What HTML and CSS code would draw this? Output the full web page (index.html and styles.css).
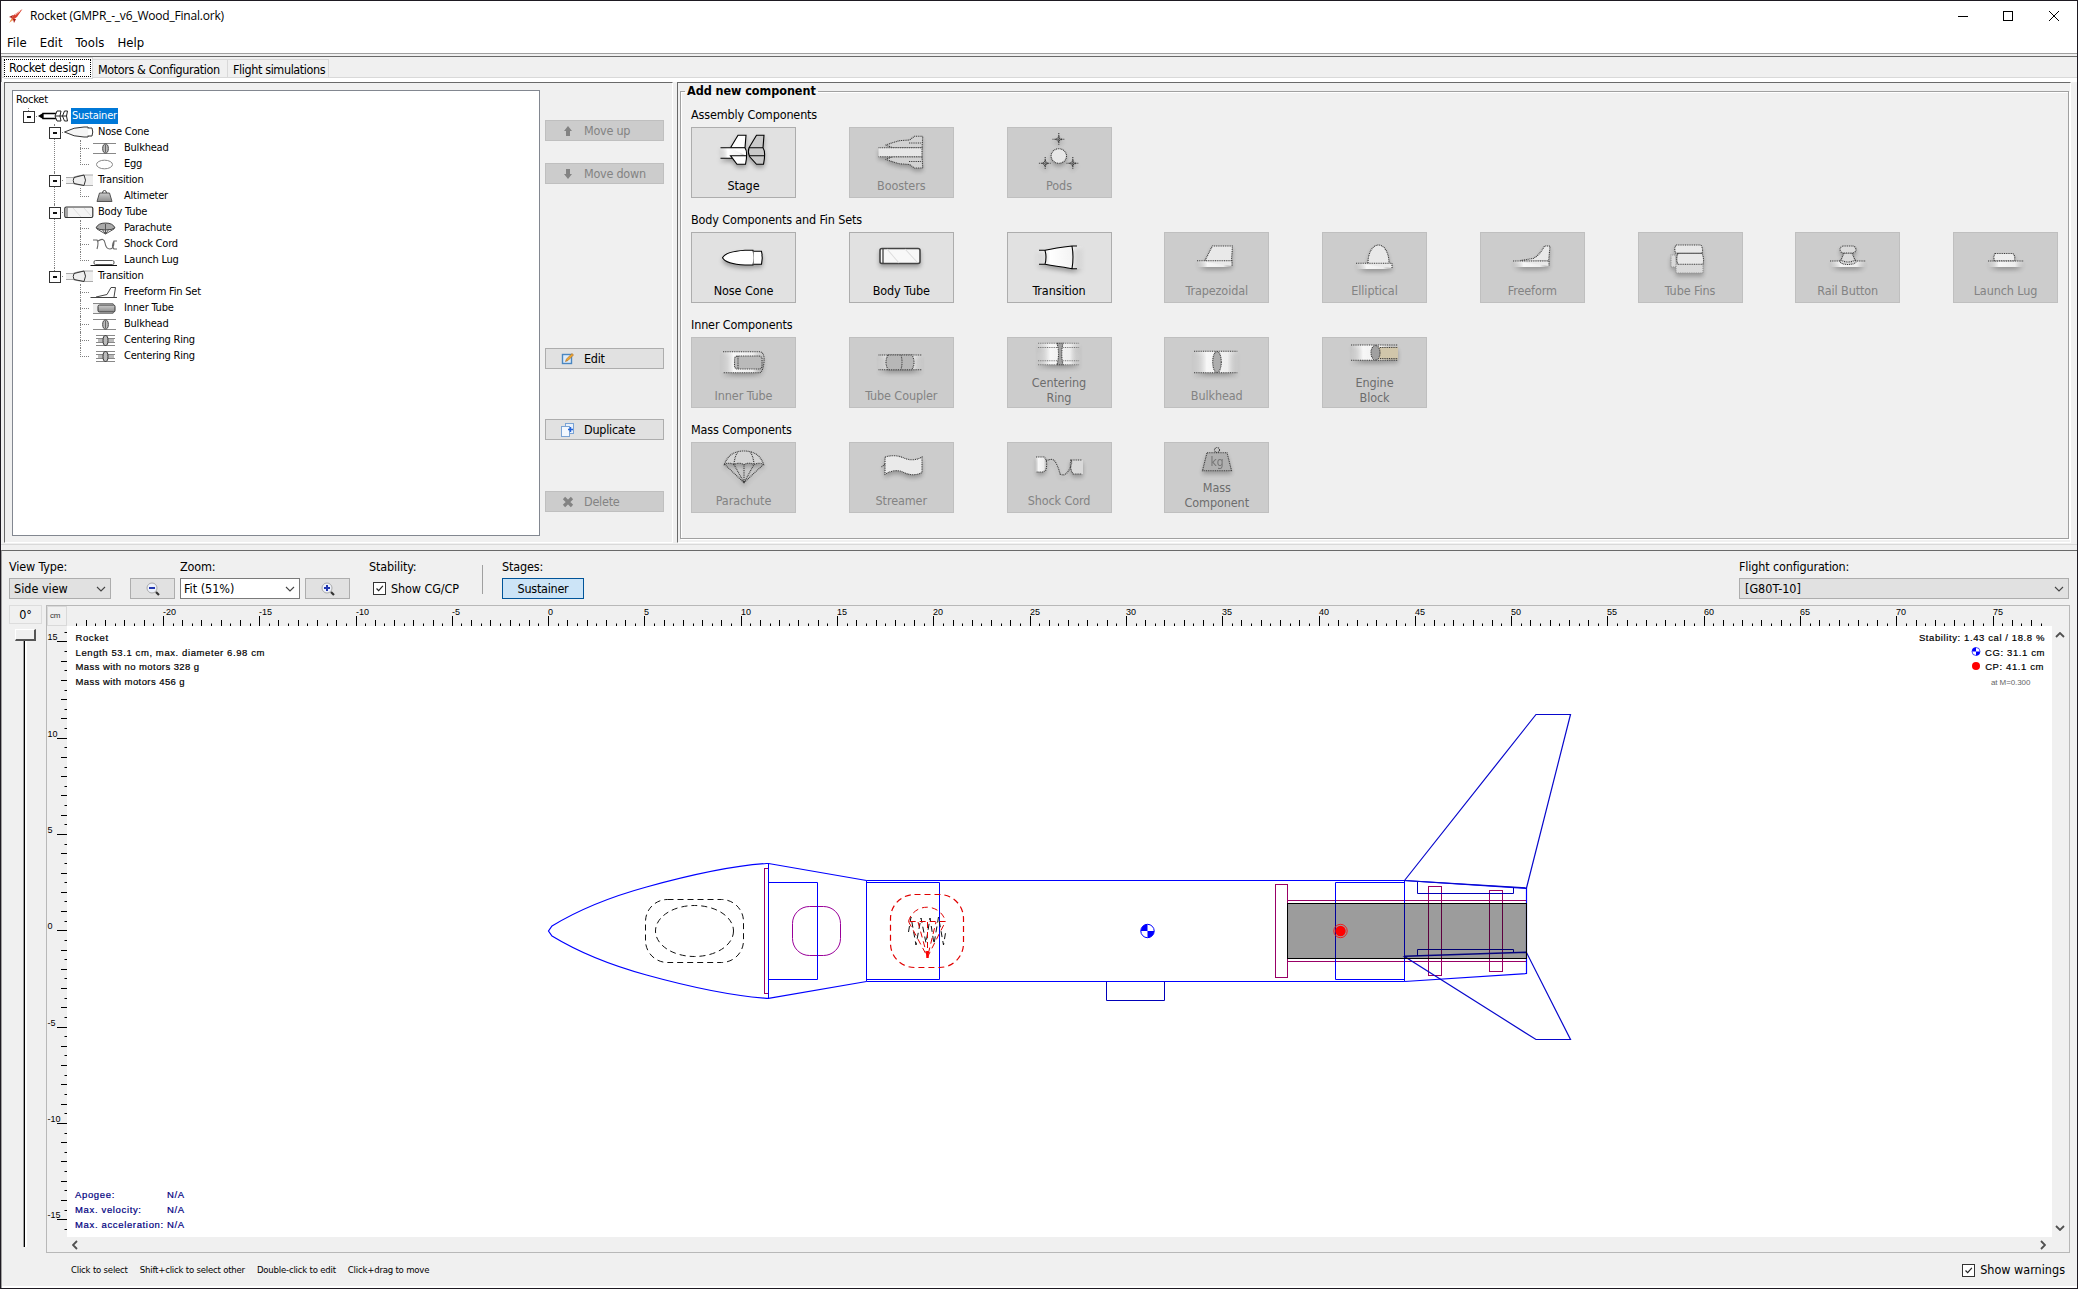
FILE: index.html
```html
<!DOCTYPE html>
<html lang="en">
<head>
<meta charset="utf-8">
<title>Rocket (GMPR_-_v6_Wood_Final.ork)</title>
<link rel="stylesheet" href="styles.css">
</head>
<body>
<svg class="defs" width="0" height="0">
  <defs>
    <linearGradient id="fadeL"><stop offset="0" stop-color="#fff" stop-opacity="0"/><stop offset=".3" stop-color="#fff"/><stop offset=".75" stop-color="#f4f4f4"/><stop offset="1" stop-color="#eee" stop-opacity="0"/></linearGradient>
    <linearGradient id="metal" x1="0" y1="0" x2="0" y2="1"><stop offset="0" stop-color="#ccc"/><stop offset="1" stop-color="#8c8c8c"/></linearGradient>
  </defs>
  <!-- tree icons -->
  <symbol id="t-stage" viewBox="0 0 30 16"><path d="M5 5.500H19V10.500H5Z" fill="#fff" stroke="#000" stroke-width="1.300"/><path d="M0 8 5 5V11Z"/><path d="M17 8 19 3H23L22 8 23 13H19ZM24.500 8 26.500 3H29.500L28.500 8 29.500 13H26.500Z" fill="#fff" stroke="#222"/><path d="M17 8h12" stroke="#222"/></symbol>
  <symbol id="t-nose" viewBox="0 0 30 16"><path d="M.500 8Q10 3 20 3H24Q26 8 24 13H20Q10 13 .500 8Z" fill="#f6f6f6" stroke="#333"/><path d="M24 4h4q1.500 4 0 8h-4" fill="#fff" stroke="#333"/></symbol>
  <symbol id="t-bulk" viewBox="0 0 30 16"><path d="M3 3.500H26M3 13.500H26" stroke="#888"/><ellipse cx="15.500" cy="8.500" rx="2.800" ry="4.500" fill="#bbb" stroke="#444"/><path d="M15.500 5v7" stroke="#666"/></symbol>
  <symbol id="t-egg" viewBox="0 0 30 16"><ellipse cx="14.500" cy="8.500" rx="8" ry="4.300" fill="#fff" stroke="#888"/></symbol>
  <symbol id="t-trans" viewBox="0 0 30 16"><path d="M2 5.500 9 5.500 20 3H29V13.500H20L9 11.500H2Z" fill="#efefef"/><path d="M2 5.500H9Q14 3.300 20 3M2 11.500H9Q14 13 20 13.500M20 3H29M20 13.500H29" fill="none" stroke="#aaa"/><path d="M10 5.500Q8.500 8.500 10 11.500M20 3Q23 8 20 13.500M10 5.500 20 3M10 11.500 20 13.500" fill="none" stroke="#333"/></symbol>
  <symbol id="t-mass" viewBox="0 0 30 16"><path d="M9.500 5h10l2.500 8.500H7Z" fill="url(#metal)" stroke="#555"/><path d="M12.500 5a2 2.500 0 0 1 4 0" fill="none" stroke="#444"/></symbol>
  <symbol id="t-tube" viewBox="0 0 30 16"><rect x=".800" y="3" width="28" height="10.500" rx="1.500" fill="#f4f4f4" stroke="#333" stroke-width="1.200"/><path d="M3 3.500v9.500" stroke="#555"/><path d="M9 4 17 13M20 4 27 12" stroke="#ddd"/></symbol>
  <symbol id="t-chute" viewBox="0 0 30 16"><path d="M6 8Q8 3 15.500 3T25 8Q22 10 15.500 10T6 8Z" fill="#aaa" stroke="#444"/><path d="M7 9 15.500 14 24 9M12 9l3.500 5 3.500-5M15.500 4v10" fill="none" stroke="#555"/></symbol>
  <symbol id="t-cord" viewBox="0 0 30 16"><path d="M3 4H7Q9 6 7 13M8 5Q14 1 15 7T20 13 24 5H27M27 13H24Q21 10 24 5" fill="none" stroke="#666" stroke-width="1.100"/></symbol>
  <symbol id="t-lug" viewBox="0 0 30 16"><path d="M.500 13.500H27" stroke="#111"/><rect x="4" y="8.500" width="20" height="4" rx="1.500" fill="#fff" stroke="#555"/></symbol>
  <symbol id="t-fin" viewBox="0 0 30 16"><path d="M.500 13.500H27" stroke="#444"/><path d="M6 13 17 10.500 21 3.500H25.500L24 13" fill="#fff" stroke="#444"/></symbol>
  <symbol id="t-inner" viewBox="0 0 30 16"><path d="M3 3.500H23Q26 8 23 13.500H3" fill="#eee" stroke="#888"/><rect x="8" y="5" width="17" height="7" rx="1.500" fill="url(#metal)" stroke="#333"/></symbol>
  <symbol id="t-ring" viewBox="0 0 30 16"><path d="M6 3.500H25M6 6.500H25M6 10.500H25M6 13.500H25" stroke="#888"/><path d="M8 8.500H24" stroke="#bbb" stroke-width="3"/><ellipse cx="15.500" cy="8.500" rx="2.500" ry="5" fill="#bbb" stroke="#333"/></symbol>
  <!-- palette icons -->
  <symbol id="i-stage" viewBox="0 0 48 48"><path d="M0 16.700H26V27.300H0Z" fill="url(#fadeL)" stroke="none"/><path d="M.500 16.700H11M.500 27.300H12"/><path d="M10.500 16.700 18 4.300H26L25 16.700Q28 21 25.500 33.300H17L10.500 24.700H26" fill="#fff"/><path d="M11 16.700H25"/><path d="M29 16.700 36.500 4.300H44L43 16.700Q46 21 43.500 33.300H36.500L29.500 25.500Q27.500 21 29 16.700H43M29.500 24.700H44" fill="#c9c9c9"/></symbol>
  <symbol id="i-boost" viewBox="0 0 48 48"><path d="M8.500 14 22 9.700 32.500 9 37.500 5.300H45.800L45 16.700H16ZM8.500 28.500 22 32.700 32.500 33.500 37.500 37H45.800L45 25.700H16Z" fill="#d4d4d4"/><path d="M32 12H44M32 30.500H44"/><path d="M1.500 16.700H45V25.700H1.500" fill="#ececec"/></symbol>
  <symbol id="i-pods" viewBox="0 0 48 48"><ellipse cx="23.800" cy="25" rx="7.700" ry="7.300" fill="#eee"/><g id="star4"><path d="M23.800 2v12.500M17.500 8.300h12.500M23.800 5l1 2.300 2.300 1-2.300 1-1 2.300-1-2.300-2.300-1 2.300-1Z"/></g><use href="#star4" x="-13.600" y="24"/><use href="#star4" x="14" y="24"/></symbol>
  <symbol id="i-nose" viewBox="0 0 48 48"><path d="M2.500 21.700Q6 15.500 25 14.300H33Q35 21.500 33 29H25Q6 28 2.500 21.700Z" fill="#fff"/><path d="M33.500 15.300H41.500Q43 21.700 41.500 28.300H33.500" fill="#fff"/></symbol>
  <symbol id="i-tube" viewBox="0 0 48 48"><rect x="3" y="12.500" width="40" height="15" rx="2" fill="#f8f8f8" stroke="#444" stroke-width="1.600"/><path d="M6 13v14" stroke="#222"/><path d="M10 13 22 27M28 13 40 26" stroke="#ddd"/></symbol>
  <symbol id="i-trans" viewBox="0 0 48 48"><path d="M1 14.300H10L37 10H48V32.700H37L10 28.300H1Z" fill="url(#fadeL)" stroke="none"/><path d="M4 14.300H10Q20 12 37 10H42M4 28.300H10Q20 30 37 32.700H42M10 14.300Q12 21 10 28.300M37 10Q39 21 37 32.700" fill="none"/></symbol>
  <symbol id="i-trap" viewBox="0 0 48 48"><path d="M4 24.700H39V31H4Z" fill="url(#fadeL)" stroke="none"/><path d="M4 24.700H39V30M12 24.500 19.300 10H39.500L38.500 24.500" fill="#efefef"/></symbol>
  <symbol id="i-ellip" viewBox="0 0 48 48"><path d="M5 27.300H41V33H5Z" fill="url(#fadeL)" stroke="none"/><path d="M5 27.300H41V32M17 27C17 16 22 9 27.500 9S38 16 38 27" fill="#efefef"/></symbol>
  <symbol id="i-free" viewBox="0 0 48 48"><path d="M5 25H41V31H5Z" fill="url(#fadeL)" stroke="none"/><path d="M5 25H41V30M12.500 24.500 25 22.500Q31 20 36.500 10H42L40.700 24.500" fill="#efefef"/></symbol>
  <symbol id="i-tfins" viewBox="0 0 48 48"><path d="M10 28.300V37H37V28.300M9 19H5V31H10" fill="#ddd" stroke="#888"/><path d="M10 9H35Q37.500 13 36 17.300H10Q7.500 13 10 9ZM12 17.300H36Q38.500 23 37 28.300H12Q9.500 23 12 17.300Z" fill="#eee"/></symbol>
  <symbol id="i-rail" viewBox="0 0 48 48"><path d="M6 25H42V31H6Z" fill="url(#fadeL)" stroke="none"/><path d="M6 25H42"/><ellipse cx="24" cy="25.500" rx="8" ry="3" fill="#ddd"/><path d="M20 17 17 24Q24 28 31 24L28 17Z" fill="#ddd"/><rect x="16" y="10" width="16" height="7" rx="3.500" fill="#ddd"/></symbol>
  <symbol id="i-lug" viewBox="0 0 48 48"><path d="M6 25H42V31H6Z" fill="url(#fadeL)" stroke="none"/><path d="M6 25H42"/><path d="M13 17.500H31Q34 21 32 24.700H12.500Q11 21 13 17.500Z" fill="#f4f4f4"/></symbol>
  <symbol id="i-inner" viewBox="0 0 48 48"><path d="M1 10.700H43V31.700H1Z" fill="url(#fadeL)" stroke="none"/><path d="M3 10.700H40Q45 12 44 21T40 31.700H3" fill="none"/><rect x="14.500" y="15" width="27.500" height="13" rx="3" fill="#b8b8b8"/><path d="M18 15v13"/></symbol>
  <symbol id="i-coup" viewBox="0 0 48 48"><path d="M1 14H46V28.700H1Z" fill="url(#fadeL)" stroke="none"/><path d="M1.500 14H45M1.500 28.700H45"/><path d="M11 14H35Q39 21 35 28.700H11Q7 21 11 14ZM24 14Q26 21 24 28.700" fill="#b4b4b4"/></symbol>
  <symbol id="i-ring" viewBox="0 0 48 48"><path d="M2 10.300H46V31.700H2Z" fill="url(#fadeL)" stroke="none"/><path d="M3 10.300H44.500M3 14.500H44.500M3 27.700H44.500M3 31.700H44.500" stroke="#666"/><path d="M22 10.300H28Q25.500 21 28 31.700H22Q25 21 22 10.300Z" fill="#999"/></symbol>
  <symbol id="i-bulk" viewBox="0 0 48 48"><path d="M0 10.300H46V31.700H0Z" fill="url(#fadeL)" stroke="none"/><path d="M1 10.300H44.500M1 31.700H44.500"/><ellipse cx="24" cy="21" rx="4.300" ry="10.500" fill="#a8a8a8"/></symbol>
  <symbol id="i-block" viewBox="0 0 48 48"><path d="M0 12H40V27.300H0Z" fill="url(#fadeL)" stroke="none"/><path d="M28 14H47V26.500H28Z" fill="#d3c5a5" stroke="none"/><path d="M0 12H47M0 27.300H47M29 14.500H47M29 25.500H47"/><ellipse cx="24.500" cy="19.700" rx="4.500" ry="7.300" fill="#999"/></symbol>
  <symbol id="i-chute" viewBox="0 0 48 48"><path d="M4.500 18.300Q9 5 24 5T43.500 18.300Q39 16 34 18.500 29 16 24 18.500 19 16 14 18.500 9 16 4.500 18.300Z" fill="#d6d6d6"/><path d="M4.500 18.300 24 36.700 43.500 18.300M14 18.500 24 36.700 34 18.500M24 18.500V36.700M14 18Q15 9 18 6M34 18Q33 9 30 6" fill="none"/></symbol>
  <symbol id="i-stream" viewBox="0 0 48 48"><path d="M8 11Q18 8 27 12T45 11V26.500Q36 31 27 26.500T8 28.300ZM8 18 4 21.500" fill="#f0f0f0"/></symbol>
  <symbol id="i-cord" viewBox="0 0 48 48"><path d="M0 11H9Q13 14 11 24L8 26H0Z" fill="url(#fadeL)" stroke="none"/><path d="M36 14H48V28H38Q34 21 36 14Z" fill="#dcdcdc" stroke="none"/><path d="M1 11H9Q13 14 11 24L8 26H1M11 15Q18 11 21 17T25 28Q30 31 34 24T36 14H47M36 14Q34 21 38 28H47" fill="none"/></symbol>
</svg>

<header class="titlebar">
  <svg class="app-icon" width="16" height="18" viewBox="0 0 16 18"><path d="M2 15 5 8.500 14.500 2 9 10Z" fill="#d9402f"/><path d="M5 8 1 10 4 11ZM8 12 6 16 5 12Z" fill="#a61e16"/><path d="M1 16 4 11 5 13Z" fill="#f3a35c"/><path d="M7 8 12 4" stroke="#f7c9c0"/></svg>
  <span class="title-text">Rocket (GMPR_-_v6_Wood_Final.ork)</span>
  <svg class="win-controls" width="102" height="12" viewBox="0 0 102 12" fill="none" stroke="#000"><path d="M0 6.500H10"/><rect x="45.500" y="1.500" width="9" height="9"/><path d="M91 1 101 11M101 1 91 11"/></svg>
</header>
<nav class="menubar"><span>File</span><span>Edit</span><span>Tools</span><span>Help</span></nav>
<nav class="tabs"><span class="tab active">Rocket design</span><span class="tab">Motors &amp; Configuration</span><span class="tab">Flight simulations</span></nav>

<main class="upper">
  <section class="design">
    <div class="tree">
      <div class="root">Rocket</div>
      <ul>
        <li><div class="node open selected"><svg><use href="#t-stage"/></svg><span>Sustainer</span></div>
          <ul>
            <li><div class="node open"><svg><use href="#t-nose"/></svg><span>Nose Cone</span></div>
              <ul>
                <li><div class="node"><svg><use href="#t-bulk"/></svg><span>Bulkhead</span></div></li>
                <li><div class="node"><svg><use href="#t-egg"/></svg><span>Egg</span></div></li>
              </ul></li>
            <li><div class="node open"><svg><use href="#t-trans"/></svg><span>Transition</span></div>
              <ul><li><div class="node"><svg><use href="#t-mass"/></svg><span>Altimeter</span></div></li></ul></li>
            <li><div class="node open"><svg><use href="#t-tube"/></svg><span>Body Tube</span></div>
              <ul>
                <li><div class="node"><svg><use href="#t-chute"/></svg><span>Parachute</span></div></li>
                <li><div class="node"><svg><use href="#t-cord"/></svg><span>Shock Cord</span></div></li>
                <li><div class="node"><svg><use href="#t-lug"/></svg><span>Launch Lug</span></div></li>
              </ul></li>
            <li><div class="node open"><svg><use href="#t-trans"/></svg><span>Transition</span></div>
              <ul>
                <li><div class="node"><svg><use href="#t-fin"/></svg><span>Freeform Fin Set</span></div></li>
                <li><div class="node"><svg><use href="#t-inner"/></svg><span>Inner Tube</span></div></li>
                <li><div class="node"><svg><use href="#t-bulk"/></svg><span>Bulkhead</span></div></li>
                <li><div class="node"><svg><use href="#t-ring"/></svg><span>Centering Ring</span></div></li>
                <li><div class="node"><svg><use href="#t-ring"/></svg><span>Centering Ring</span></div></li>
              </ul></li>
          </ul></li>
      </ul>
    </div>
    <div class="actions">
      <button class="btn action up" disabled><svg viewBox="0 0 16 16"><path d="M8 3 12 8H10V13H6V8H4Z" fill="#838383"/></svg>Move up</button>
      <button class="btn action down" disabled><svg viewBox="0 0 16 16"><path d="M8 13 12 8H10V3H6V8H4Z" fill="#838383"/></svg>Move down</button>
      <button class="btn action edit"><svg viewBox="0 0 16 16"><rect x="2.500" y="3.500" width="9" height="9" fill="#dcebfa" stroke="#4a86c0" stroke-width="1.400"/><path d="M5.500 10.500 6.500 8 12 2.500 13.500 4 8 9.500Z" fill="#f0a830" stroke="#a8641a" stroke-width=".6"/></svg>Edit</button>
      <button class="btn action dup"><svg viewBox="0 0 16 16"><rect x="5.500" y="1.500" width="8" height="10" fill="#e8f1fc" stroke="#7aa3d4"/><rect x="1.500" y="4.500" width="8" height="10" fill="#f3f8fe" stroke="#7aa3d4"/><path d="M8 7.500h5M10.500 5v5" stroke="#2463d8" stroke-width="1.400"/></svg>Duplicate</button>
      <button class="btn action del" disabled><svg viewBox="0 0 16 16"><path d="M4 4 12 12M12 4 4 12" stroke="#838383" stroke-width="3.200"/></svg>Delete</button>
    </div>
  </section>

  <section class="palette">
    <fieldset>
      <legend>Add new component</legend>
      <h3>Assembly Components</h3>
      <div class="row">
        <button class="btn part"><svg><use href="#i-stage"/></svg>Stage</button>
        <button class="btn part" disabled><svg><use href="#i-boost"/></svg>Boosters</button>
        <button class="btn part" disabled><svg><use href="#i-pods"/></svg>Pods</button>
      </div>
      <h3>Body Components and Fin Sets</h3>
      <div class="row">
        <button class="btn part"><svg><use href="#i-nose"/></svg>Nose Cone</button>
        <button class="btn part"><svg><use href="#i-tube"/></svg>Body Tube</button>
        <button class="btn part"><svg><use href="#i-trans"/></svg>Transition</button>
        <button class="btn part" disabled><svg><use href="#i-trap"/></svg>Trapezoidal</button>
        <button class="btn part" disabled><svg><use href="#i-ellip"/></svg>Elliptical</button>
        <button class="btn part" disabled><svg><use href="#i-free"/></svg>Freeform</button>
        <button class="btn part" disabled><svg><use href="#i-tfins"/></svg>Tube Fins</button>
        <button class="btn part" disabled><svg><use href="#i-rail"/></svg>Rail Button</button>
        <button class="btn part" disabled><svg><use href="#i-lug"/></svg>Launch Lug</button>
      </div>
      <h3>Inner Components</h3>
      <div class="row">
        <button class="btn part" disabled><svg><use href="#i-inner"/></svg>Inner Tube</button>
        <button class="btn part" disabled><svg><use href="#i-coup"/></svg>Tube Coupler</button>
        <button class="btn part two" disabled><svg><use href="#i-ring"/></svg><span>Centering<br>Ring</span></button>
        <button class="btn part" disabled><svg><use href="#i-bulk"/></svg>Bulkhead</button>
        <button class="btn part two" disabled><svg><use href="#i-block"/></svg><span>Engine<br>Block</span></button>
      </div>
      <h3>Mass Components</h3>
      <div class="row">
        <button class="btn part" disabled><svg><use href="#i-chute"/></svg>Parachute</button>
        <button class="btn part" disabled><svg><use href="#i-stream"/></svg>Streamer</button>
        <button class="btn part" disabled><svg><use href="#i-cord"/></svg>Shock Cord</button>
        <button class="btn part two" disabled><svg viewBox="0 0 48 48"><path d="M14 14.700H34L38.500 32.700H9.500Z" fill="#aaa"/><circle cx="24" cy="12" r="2.500" fill="none"/><text class="kg" x="24" y="28">kg</text></svg><span>Mass<br>Component</span></button>
      </div>
    </fieldset>
  </section>
</main>

<section class="lower">
  <div class="controls">
    <div class="field view"><label>View Type:</label><div class="combo">Side view<svg class="chev" viewBox="0 0 10 6"><path d="M1 1 5 5 9 1"/></svg></div></div>
    <div class="field zoomctl">
      <label>Zoom:</label>
      <div class="line">
        <button class="btn sq"><svg viewBox="0 0 16 16"><circle cx="7" cy="7" r="5" fill="#eef2fb" stroke="#aaa"/><path d="M4 7H10" stroke="#2338b0" stroke-width="2"/><path d="M11 11 14 14" stroke="#333" stroke-width="2.200"/></svg></button>
        <div class="combo white">Fit (51%)<svg class="chev" viewBox="0 0 10 6"><path d="M1 1 5 5 9 1"/></svg></div>
        <button class="btn sq"><svg viewBox="0 0 16 16"><circle cx="7" cy="7" r="5" fill="#eef2fb" stroke="#aaa"/><path d="M4 7H10M7 4V10" stroke="#2338b0" stroke-width="2"/><path d="M11 11 14 14" stroke="#333" stroke-width="2.200"/></svg></button>
      </div>
    </div>
    <div class="field stab"><label>Stability:</label><div class="check"><i><svg viewBox="0 0 13 13"><path d="M3 6.500 5.500 9 10.500 3.500"/></svg></i>Show CG/CP</div></div>
    <div class="sep"></div>
    <div class="field stages"><label>Stages:</label><button class="btn toggle">Sustainer</button></div>
    <div class="field flight"><label>Flight configuration:</label><div class="combo">[G80T-10]<svg class="chev" viewBox="0 0 10 6"><path d="M1 1 5 5 9 1"/></svg></div></div>
  </div>

  <div class="work">
    <div class="rotate">
      <div class="deg">0°</div>
      <div class="thumb"></div>
      <div class="track"></div>
    </div>
    <div class="viewer">
      <div class="unit">cm</div>
      <svg class="hruler" id="hruler" viewBox="67 605 1985 20"></svg>
      <svg class="vruler" id="vruler" viewBox="47 625 20 611"></svg>
      <svg class="stage" viewBox="67 625 1985 611" fill="none" stroke="#0000ff">
        <g stroke="#990066"><rect x="764.500" y="867.500" width="4" height="125"/><rect x="1275.500" y="883.500" width="12" height="93"/><path d="M1287.500 899.500H1526.500M1287.500 960.500H1526.500"/><rect x="1428.500" y="885.500" width="13" height="89"/><rect x="1489.500" y="889.500" width="13" height="81"/></g>
        <rect x="792.500" y="905.500" width="48" height="49" rx="17" stroke="#990099"/>
        <path d="M768.500 862.500V997.500M768.500 881.500H817.500V978.500H768.500M866.500 879.500H1404.500V980.500H866.500ZM866.500 881.500H939.500V978.500H866.500M1404.500 881.500H1335.500V978.500H1404.500"/>
        <path stroke-width="1.200" d="M768.500 862.500H766.500C735 864.500 690 874 646.500 886 610 896 575 911 552 925L548.500 930 552 935C575 949 610 964 646.500 974 690 986 735 995 766.500 997.300H768.500L866.500 980.500M768.500 862.500 866.500 879.500M1404.500 879.500 1526.500 887.500V972.500L1404.500 980.500"/>
        <g stroke="#111" stroke-dasharray="6 4"><rect x="645.500" y="898.500" width="98" height="63" rx="22"/><ellipse cx="694.500" cy="930" rx="39" ry="25.500"/><path d="M908.500 931 911 916 916 944 921 917 926 942 930 917 934 943 938.500 916 943.500 944 946 929"/></g>
        <g stroke="#e00000" stroke-dasharray="6 4"><rect x="890.500" y="893.500" width="73" height="73" rx="24" stroke-width="1.200"/><path d="M908.500 920.500A19 18.500 0 0 1 945.500 920.500ZM908.500 920.500 927.500 956 945.500 920.500M918 921 927.500 956 936 921M927.500 921V956"/></g>
        <path d="M927.500 950V957" stroke="#f00" stroke-width="2.500"/>
        <path stroke="#0000b8" d="M1106.500 980.500V999.500H1164.500V980.500M1417.500 881V892.500H1513.500V887M1417.500 955V948.500H1513.500V952"/>
        <path stroke="#0808cc" stroke-width="1.200" d="M1404.500 879.500 1536 713.500H1570.500L1526.500 887ZM1404.500 955.500 1526.500 951.500 1570.500 1038.500H1536ZM1404.500 955 1526.500 951"/>
        <rect x="1287.500" y="902.500" width="239" height="55" fill="#000" fill-opacity=".39" stroke="#000"/>
        <circle cx="1147.500" cy="930" r="6.700" fill="#fff"/><path d="M1147.500 930V923.300A6.700 6.700 0 0 0 1140.800 930ZM1147.500 930V936.700A6.700 6.700 0 0 0 1154.200 930Z" fill="#00f" stroke="none"/>
        <circle cx="1340.500" cy="930" r="5.200" fill="#f00" stroke="none"/><circle cx="1340.500" cy="930" r="6.700" stroke="#f00" stroke-width=".8"/>
        <circle cx="1976" cy="650.500" r="4" fill="#fff" stroke-width=".7"/><path d="M1976 650.500V646.500A4 4 0 0 0 1972 650.500ZM1976 650.500V654.500A4 4 0 0 0 1980 650.500Z" fill="#00f" stroke="none"/>
        <circle cx="1976" cy="665" r="4" fill="#f00" stroke="none"/>
        <g class="info"><text x="75.500" y="640">Rocket</text><text x="75.500" y="655">Length 53.1 cm, max. diameter 6.98 cm</text><text class="tight" x="75.500" y="669">Mass with no motors 328 g</text><text class="tight" x="75.500" y="684">Mass with motors 456 g</text></g>
        <g class="info end"><text x="2045" y="640">Stability: 1.43 cal / 18.8 %</text><text x="2045" y="655">CG: 31.1 cm</text><text x="2044" y="669">CP: 41.1 cm</text></g>
        <text class="mach" x="1991" y="684">at M=0.300</text>
        <g class="info flightdata"><text x="75" y="1197">Apogee:</text><text x="167" y="1197">N/A</text><text x="75" y="1212">Max. velocity:</text><text x="167" y="1212">N/A</text><text x="75" y="1227">Max. acceleration:</text><text x="167" y="1227">N/A</text></g>
      </svg>
      <div class="vscroll"><svg class="arrow" viewBox="0 0 10 6"><path d="M1 5 5 1 9 5"/></svg><svg class="arrow" viewBox="0 0 10 6"><path d="M1 1 5 5 9 1"/></svg></div>
      <div class="hscroll"><svg class="arrow h" viewBox="0 0 6 10"><path d="M5 1 1 5 5 9"/></svg><svg class="arrow h" viewBox="0 0 6 10"><path d="M1 1 5 5 1 9"/></svg></div>
    </div>
  </div>

  <footer class="status">
    <span>Click to select</span><span>Shift+click to select other</span><span>Double-click to edit</span><span>Click+drag to move</span>
    <div class="check warn"><i><svg viewBox="0 0 13 13"><path d="M3 6.500 5.500 9 10.500 3.500"/></svg></i>Show warnings</div>
  </footer>
</section>
<script src="rulers.js"></script>
</body>
</html>
```
FILE: rulers.js
```js
// Draws both rulers: long ticks every 5 cm, medium every 1 cm, short every 0.5 cm.
const PX_PER_CM = 19.26;
const tickLength = half => half % 10 === 0 ? 10 : half % 2 === 0 ? 6 : 2.5;

let h = "";
for (let half = -49; half <= 155; half++) {
  const x = Math.floor(548.6 + half / 2 * PX_PER_CM) + 0.5;
  h += `<path d="M${x} 625V${625 - tickLength(half)}"/>`;
  if (half % 10 === 0) h += `<text x="${x - 0.5}" y="614">${half / 2}</text>`;
}
document.getElementById("hruler").innerHTML = h;

let v = "";
for (let half = -31; half <= 31; half++) {
  const y = Math.floor(929.8 - half / 2 * PX_PER_CM) + 0.5;
  v += `<path d="M67 ${y}H${67 - tickLength(half)}"/>`;
  if (half % 10 === 0) v += `<text x="47.500" y="${y - 2}">${half / 2}</text>`;
}
document.getElementById("vruler").innerHTML = v;
```
FILE: styles.css
```css
* { box-sizing: border-box; }
body {
  margin: 0; width: 2078px; height: 1289px; overflow: hidden;
  display: flex; flex-direction: column;
  background: #f0f0f0; color: #000;
  border: 1px solid #1e1a22;
  font: 12.5px/16px "DejaVu Sans Condensed", "Noto Sans", sans-serif;
  letter-spacing: -0.25px;
}
.defs { position: absolute; }
svg { display: block; flex: none; }

.titlebar { height: 29px; background: #fff; display: flex; align-items: center; padding: 0 17px 0 7px; }
.app-icon { margin-right: 6px; }
.title-text { font: 12px/16px "Open Sans", "Noto Sans", sans-serif; letter-spacing: -0.2px; }
.win-controls { margin-left: auto; }
.menubar { height: 24px; background: #fff; border-bottom: 1px solid #a0a0a0; display: flex; gap: 13px; padding: 5px 6px 0; font-size: 13px; letter-spacing: 0.05px; }

.tabs { height: 26px; margin: 2px 0 0; border-top: 1px solid #696969; border-left: 1px solid #a0a0a0; display: flex; align-items: flex-end; padding: 0 0 3px 2px; letter-spacing: -0.4px; position: relative; }
.tabs::after { content: ""; position: absolute; left: 0; right: 0; bottom: 0; height: 4px; background: #fff; border-top: 1px solid #d9d9d9; }
.tab { height: 20px; border: 1px solid #d9d9d9; border-left: 0; padding: 2px 4px 0 5px; white-space: nowrap; }
.tab + .tab { width: 101px; }
.tab:nth-child(2) { width: 135px; }
.tab.active { width: 89px; height: 22px; background: #fff; position: relative; z-index: 1; padding-left: 5px; letter-spacing: -0.2px; }
.tab.active::after { content: ""; position: absolute; inset: 1px 1px 1px 0; border: 1px dotted #000; }

.upper { height: 463px; display: flex; gap: 4px; padding: 0 6px 0 3px; border-bottom: 1px solid #d9d9d9; }
.design, .palette { border: 1px solid #696969; border-right-color: #fff; border-bottom-color: #fff; height: 461px; }
.design { width: 669px; display: flex; padding: 7px 0 0 7px; gap: 5px; }
.tree { width: 528px; height: 446px; background: #fff; border: 1px solid #828790; font-size: 11px; letter-spacing: -0.22px; padding-top: 1px; }
.root { height: 16px; padding-left: 3px; }
.tree ul { list-style: none; margin: 0; padding: 0 0 0 26px; }
.tree .root + ul { padding-left: 10px; }
.tree li { position: relative; }
.tree li::before { content: ""; position: absolute; left: 5px; top: 0; bottom: 0; border-left: 1px dotted #808080; }
.tree li:last-child::before { bottom: auto; height: 9px; }
.node { height: 16px; display: flex; align-items: center; position: relative; padding-left: 15px; }
.node::before { content: ""; position: absolute; left: 5px; top: 8px; width: 9px; border-top: 1px dotted #808080; }
.node.open::after { content: ""; position: absolute; left: 0; top: 3px; width: 10px; height: 10px; border: 1px solid #333; background: linear-gradient(#111, #111) center / 4px 2px no-repeat #fff; }
.node svg { width: 30px; height: 16px; fill: none; }
.node svg use { fill: #000; }
.node span { margin-left: 3px; padding: 0 1px; line-height: 16px; }
.selected span { background: #0078d7; color: #fff; }

.btn { appearance: none; margin: 0; font: inherit; letter-spacing: inherit; color: #000; background: #e1e1e1; border: 1px solid #adadad; border-radius: 0; padding: 0; }
.btn:disabled { background: #ccc; border-color: #bfbfbf; color: #838383; }
.actions { width: 119px; display: flex; flex-direction: column; padding-top: 30px; }
.action { height: 21px; display: flex; align-items: center; gap: 8px; padding-left: 14px; }
.action svg { width: 16px; height: 16px; }
.down { margin-top: 22px; }
.edit { margin-top: 164px; }
.dup { margin-top: 50px; }
.del { margin-top: 51px; }

.palette { flex: 1; padding: 0 1px 0 2px; }
fieldset { height: 456px; margin: 0; border: 1px solid #a0a0a0; box-shadow: 1px 1px #fff, inset 1px 1px #fff; padding: 8px 0 0 10px; min-width: 0; }
legend { margin-left: -6px; padding: 0 2px; font-weight: bold; font-size: 12.5px; letter-spacing: -0.05px; height: 16px; }
h3 { margin: 0; font: inherit; height: 20px; letter-spacing: -0.15px; }
.row { display: grid; grid-template-columns: repeat(9, 105px); column-gap: 52.75px; margin-bottom: 14px; letter-spacing: -0.1px; }
.part { height: 71px; display: flex; flex-direction: column; align-items: center; line-height: 15px; }
.part svg { width: 48px; height: 48px; margin: 3px 0 -1px; fill: none; stroke: #000; stroke-width: 1.1; filter: drop-shadow(0 3px 2px rgba(0, 0, 0, .3)); }
.part:disabled svg { stroke-dasharray: 1 .8; stroke: #222; opacity: .85; }
.part.two { color: #6d6d6d; text-align: center; }
.part.two svg { margin: -5px 0 -6px; }
.kg { text-anchor: middle; font: 12px "DejaVu Sans Condensed", sans-serif; stroke: none; fill: #666; }

.lower { flex: 1; margin: 5px 0 0; border-top: 1px solid #696969; border-left: 1px solid #a0a0a0; display: flex; flex-direction: column; min-height: 0; }
.controls { height: 54px; display: flex; padding: 8px 8px 0 7px; }
.field label { display: block; height: 19px; letter-spacing: -0.15px; }
.combo { height: 21px; border: 1px solid #adadad; background: #e1e1e1; display: flex; align-items: center; justify-content: space-between; padding: 0 4px; letter-spacing: 0; }
.combo.white { background: #fff; border-color: #7a7a7a; width: 120px; padding-left: 3px; }
.chev { width: 10px; height: 6px; fill: none; stroke: #444; stroke-width: 1.1; }
.view { width: 102px; }
.zoomctl { margin-left: 19px; }
.zoomctl label { padding-left: 50px; }
.line { display: flex; gap: 5px; }
.sq { width: 45px; height: 21px; display: grid; place-items: center; }
.sq svg { width: 16px; height: 16px; }
.stab { margin-left: 19px; width: 96px; }
.check { display: flex; align-items: center; gap: 5px; height: 21px; white-space: nowrap; letter-spacing: -0.1px; }
.stab .check { padding-left: 4px; }
.check i { width: 13px; height: 13px; border: 1px solid #333; background: #fff; }
.check svg { width: 11px; height: 11px; fill: none; stroke: #222; stroke-width: 1.4; }
.sep { width: 1px; height: 29px; background: #a0a0a0; margin: 6px 19px 0 17px; }
.toggle { width: 82px; height: 21px; background: #cce4f7; border-color: #005499; }
.flight { width: 330px; margin-left: auto; }
.flight .combo { padding-left: 5px; }

.work { height: 648px; display: flex; gap: 4px; padding: 0 7px 0 7px; }
.rotate { width: 33px; display: flex; flex-direction: column; }
.deg { height: 19px; border: 1px solid #dcdcdc; text-align: center; line-height: 17px; }
.thumb { width: 21px; height: 12px; margin: 5px 0 0 6px; background: #f0f0f0; border: 1px solid #fff; border-right: 2px solid #555; border-bottom: 2px solid #555; }
.track { width: 4px; height: 606px; margin-left: 14px; background: linear-gradient(90deg, #a0a0a0 1px, #000 1px, #000 2px, #fff 2px); }
.viewer { flex: 1; border: 1px solid #b8b8b8; display: grid; grid-template: 20px 611px 15px / 20px 1985px 16px; }
.unit { border: 1px solid #d9d9d9; font: 8px/18px "Liberation Sans", Arial, sans-serif; letter-spacing: -0.2px; color: #333; padding-left: 2px; }
.hruler, .stage { width: 1985px; }
.hruler { height: 20px; grid-column: 2; }
.vruler { width: 20px; height: 611px; grid-row: 2; grid-column: 1; }
.hruler path, .vruler path { stroke: #000; }
.hruler text, .vruler text { font: 9px "Liberation Sans", Arial, sans-serif; letter-spacing: 0; }
.stage { height: 611px; background: #fff; grid-row: 2; grid-column: 2; }
.info text { font: 9.5px "Liberation Sans", Arial, sans-serif; letter-spacing: 0.6px; fill: #000; stroke: #000; stroke-width: .2px; }
.info .tight { letter-spacing: 0.42px; }
.info.end text { text-anchor: end; }
.flightdata text { fill: #000080; stroke: #000080; letter-spacing: 0.65px; }
.mach { font: 8px "Liberation Sans", Arial, sans-serif; letter-spacing: -0.1px; fill: #666; stroke: none; }
.vscroll { grid-row: 2; grid-column: 3; display: flex; flex-direction: column; justify-content: space-between; align-items: center; padding: 6px 0; }
.hscroll { grid-row: 3; grid-column: 2; display: flex; justify-content: space-between; align-items: center; padding: 0 6px 0 5px; }
.arrow { width: 10px; height: 6px; fill: none; stroke: #505050; stroke-width: 1.8; }
.arrow.h { width: 6px; height: 10px; }

.status { flex: 1; display: flex; align-items: center; gap: 12px; padding: 1px 12px 0 69px; font-size: 9.5px; letter-spacing: -0.2px; border-bottom: 2px solid #fff; }
.warn { margin-left: auto; font-size: 12.5px; letter-spacing: 0; }
```
